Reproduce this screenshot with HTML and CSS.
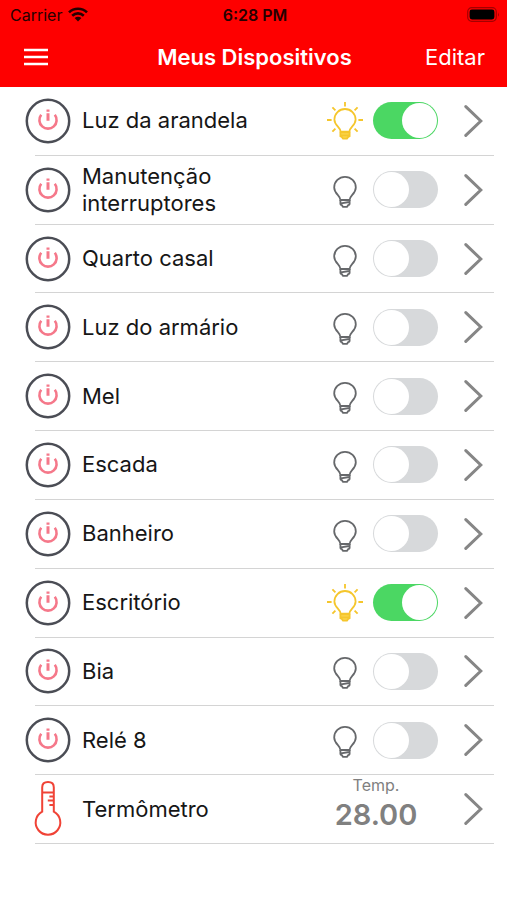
FILE: index.html
```html
<!DOCTYPE html>
<html lang="pt-BR">
<head>
<meta charset="utf-8">
<meta name="viewport" content="width=device-width, initial-scale=1">
<title>Meus Dispositivos</title>
<link rel="stylesheet" href="styles.css">
</head>
<body>
<svg class="sprite" aria-hidden="true">
  <symbol id="power" viewBox="0 0 46 46">
    <circle cx="23" cy="23" r="21.2" fill="none" stroke="#4b4d55" stroke-width="2.5"/>
    <path d="M16.2 16.8A8.6 8.6 0 1 0 29.8 16.8" fill="none" stroke="#f5788a" stroke-width="2.6"/>
    <path d="M23 11.6v2.2M23 15.2v7.6" fill="none" stroke="#f5788a" stroke-width="3"/>
  </symbol>
  <symbol id="bulb" viewBox="0 0 36 38">
    <path d="M13.4 29C13.4 24.6 7.2 22.8 7.2 16.4A10.8 10.6 0 0 1 28.8 16.4C28.8 22.8 22.6 24.6 22.6 29Z"/>
    <path d="M13.4 29V33Q13.6 34 14.8 34.2L16 35.8H20L21.2 34.2Q22.4 34 22.6 33V29M14 32.4L22 31"/>
  </symbol>
  <symbol id="rays" viewBox="0 0 36 38">
    <path d="M18 0v4.4M5.4 5.4l3 3M30.6 5.4l-3 3M0 18h4.6M31.4 18H36M5.4 29.6l3-3M30.6 29.6l-3-3"/>
    <path d="M13.6 29.6C13.6 25.2 7.4 23.6 7.4 17.4A10.6 10.4 0 0 1 28.6 17.4C28.6 23.6 22.4 25.2 22.4 29.6Z"/>
    <path d="M13.4 30.4h9.2v3.8l-1.4.8-1.2 1.6h-4l-1.2-1.6-1.4-.8Z" fill="#fbd54c"/>
    <path d="M14 33.4h8"/>
  </symbol>
  <symbol id="chevron" viewBox="0 0 20 34">
    <path d="M1.8 2.6L16.8 17 1.8 31.4" fill="none" stroke="#868686" stroke-width="3" stroke-linecap="round"/>
  </symbol>
</svg>

<header class="top">
  <div class="status">
    <span class="carrier">Carrier
      <svg class="wifi" viewBox="0 0 20 15" aria-hidden="true">
        <path d="M1 5.4C6 .6 14 .6 19 5.4M4.2 8.7C7.6 5.6 12.4 5.6 15.8 8.7" fill="none" stroke="#260000" stroke-width="2.6"/>
        <path d="M6.6 11.1C8.6 9.3 11.4 9.3 13.4 11.1L10 14.6Z" fill="#260000"/>
      </svg>
    </span>
    <span class="time">6:28 PM</span>
    <svg class="battery" viewBox="0 0 33 15" aria-hidden="true">
      <rect x=".7" y=".7" width="28.6" height="13.6" rx="4" fill="none" stroke="#a30000" stroke-width="1.2"/>
      <rect x="2.6" y="2.6" width="24.8" height="9.8" rx="2.4" fill="#000"/>
      <path d="M31 5.2q1.8 2.3 0 4.6Z" fill="#a30000"/>
    </svg>
  </div>
  <nav class="bar">
    <button class="menu" type="button" aria-label="Menu">
      <svg viewBox="0 0 24 18" aria-hidden="true"><path d="M0 2h24M0 9h24M0 16h24" stroke="#fff" stroke-width="2.6"/></svg>
    </button>
    <h1>Meus Dispositivos</h1>
    <button class="edit" type="button">Editar</button>
  </nav>
</header>

<main>
<ul class="devices">
  <li class="row"><svg class="icon" aria-hidden="true"><use href="#power"/></svg><label class="name" for="d1">Luz da arandela</label><svg class="bulb on" aria-hidden="true"><use href="#rays"/></svg><input class="switch" type="checkbox" id="d1" checked><a class="more" href="#d1" aria-label="Detalhes"><svg aria-hidden="true"><use href="#chevron"/></svg></a></li>
  <li class="row"><svg class="icon" aria-hidden="true"><use href="#power"/></svg><label class="name" for="d2">Manutenção interruptores</label><svg class="bulb" aria-hidden="true"><use href="#bulb"/></svg><input class="switch" type="checkbox" id="d2"><a class="more" href="#d2" aria-label="Detalhes"><svg aria-hidden="true"><use href="#chevron"/></svg></a></li>
  <li class="row"><svg class="icon" aria-hidden="true"><use href="#power"/></svg><label class="name" for="d3">Quarto casal</label><svg class="bulb" aria-hidden="true"><use href="#bulb"/></svg><input class="switch" type="checkbox" id="d3"><a class="more" href="#d3" aria-label="Detalhes"><svg aria-hidden="true"><use href="#chevron"/></svg></a></li>
  <li class="row"><svg class="icon" aria-hidden="true"><use href="#power"/></svg><label class="name" for="d4">Luz do armário</label><svg class="bulb" aria-hidden="true"><use href="#bulb"/></svg><input class="switch" type="checkbox" id="d4"><a class="more" href="#d4" aria-label="Detalhes"><svg aria-hidden="true"><use href="#chevron"/></svg></a></li>
  <li class="row"><svg class="icon" aria-hidden="true"><use href="#power"/></svg><label class="name" for="d5">Mel</label><svg class="bulb" aria-hidden="true"><use href="#bulb"/></svg><input class="switch" type="checkbox" id="d5"><a class="more" href="#d5" aria-label="Detalhes"><svg aria-hidden="true"><use href="#chevron"/></svg></a></li>
  <li class="row"><svg class="icon" aria-hidden="true"><use href="#power"/></svg><label class="name" for="d6">Escada</label><svg class="bulb" aria-hidden="true"><use href="#bulb"/></svg><input class="switch" type="checkbox" id="d6"><a class="more" href="#d6" aria-label="Detalhes"><svg aria-hidden="true"><use href="#chevron"/></svg></a></li>
  <li class="row"><svg class="icon" aria-hidden="true"><use href="#power"/></svg><label class="name" for="d7">Banheiro</label><svg class="bulb" aria-hidden="true"><use href="#bulb"/></svg><input class="switch" type="checkbox" id="d7"><a class="more" href="#d7" aria-label="Detalhes"><svg aria-hidden="true"><use href="#chevron"/></svg></a></li>
  <li class="row"><svg class="icon" aria-hidden="true"><use href="#power"/></svg><label class="name" for="d8">Escritório</label><svg class="bulb on" aria-hidden="true"><use href="#rays"/></svg><input class="switch" type="checkbox" id="d8" checked><a class="more" href="#d8" aria-label="Detalhes"><svg aria-hidden="true"><use href="#chevron"/></svg></a></li>
  <li class="row"><svg class="icon" aria-hidden="true"><use href="#power"/></svg><label class="name" for="d9">Bia</label><svg class="bulb" aria-hidden="true"><use href="#bulb"/></svg><input class="switch" type="checkbox" id="d9"><a class="more" href="#d9" aria-label="Detalhes"><svg aria-hidden="true"><use href="#chevron"/></svg></a></li>
  <li class="row"><svg class="icon" aria-hidden="true"><use href="#power"/></svg><label class="name" for="d10">Relé 8</label><svg class="bulb" aria-hidden="true"><use href="#bulb"/></svg><input class="switch" type="checkbox" id="d10"><a class="more" href="#d10" aria-label="Detalhes"><svg aria-hidden="true"><use href="#chevron"/></svg></a></li>
  <li class="row" id="d11">
    <svg class="icon thermo" viewBox="0 0 46 56" aria-hidden="true">
      <path d="M17.2 30.6V6.4Q17.2 1 23 1T28.8 6.4V30.6A12.3 12.3 0 1 1 17.2 30.6ZM17.2 11.4H28.8M28.8 15.4H24.4M28.8 19.6H22.8M28.8 24H24.4" fill="none" stroke="#f04336" stroke-width="2"/>
    </svg>
    <span class="name">Termômetro</span>
    <span class="reading"><span class="unit">Temp.</span><span class="value">28.00</span></span>
    <a class="more" href="#d11" aria-label="Detalhes"><svg aria-hidden="true"><use href="#chevron"/></svg></a>
  </li>
</ul>
</main>
</body>
</html>
```
FILE: styles.css
```css
* {
  box-sizing: border-box;
}

body {
  margin: 0;
  background: #fff;
  color: #161616;
  font-family: Inter, "Liberation Sans", sans-serif;
}

button {
  border: 0;
  padding: 0;
  background: none;
  color: #fff;
  font: inherit;
}

svg {
  display: block;
  flex: none;
}

.sprite {
  position: absolute;
  width: 0;
  height: 0;
}

/* Header */
.top {
  padding-bottom: 2px;
  background: #fe0000;
  color: #fff;
}

.status,
.bar {
  display: grid;
  grid-template-columns: 1fr auto 1fr;
  align-items: center;
}

.status {
  height: 29px;
  padding: 0 7px 0 10px;
  color: #260000;
  font-size: 16px;
}

.carrier {
  display: flex;
  align-items: center;
  gap: 6px;
}

.wifi {
  width: 20px;
  height: 15px;
}

.time {
  font-size: 16px;
  font-weight: 600;
}

.battery {
  width: 33px;
  height: 15px;
  justify-self: end;
}

.bar {
  height: 56px;
  padding: 0 22px 0 24px;
}

.menu {
  justify-self: start;
}

.menu svg {
  width: 24px;
  height: 18px;
}

h1 {
  margin: 0;
  font-size: 22px;
  font-weight: 600;
}

.edit {
  justify-self: end;
  font-size: 22px;
}

/* Device list */
.devices {
  display: grid;
  grid-auto-rows: 1fr;
  min-height: 757px;
  margin: 0;
  padding: 0;
  list-style: none;
}

.row {
  display: flex;
  align-items: center;
  margin: 0 13px 0 35px;
  padding-right: 10px;
  border-bottom: 1px solid #d4d4d4;
}

.icon {
  width: 46px;
  height: 46px;
  margin: 0 11px 0 -10px;
}

.thermo {
  height: 56px;
}

.name {
  flex: 1;
  min-width: 0;
  font-size: 22px;
  line-height: 27px;
}

label.name {
  padding-right: 60px;
}

.bulb {
  width: 36px;
  height: 38px;
  margin-right: 10px;
  fill: none;
  stroke: #66686b;
  stroke-width: 1.8;
}

.bulb.on {
  stroke: #f5c62c;
}

.switch {
  appearance: none;
  flex: none;
  width: 65px;
  height: 37px;
  margin: 0;
  padding: 1px;
  border-radius: 19px;
  background: #d7d9db;
}

.switch::before {
  content: "";
  display: block;
  width: 35px;
  height: 35px;
  border-radius: 50%;
  background: #fff;
}

.switch:checked {
  background: #4bd763;
}

.switch:checked::before {
  margin-left: auto;
}

.more {
  margin-left: 26px;
}

.more svg {
  width: 20px;
  height: 34px;
}

.reading {
  display: flex;
  flex-direction: column;
  align-items: center;
  align-self: flex-start;
  width: 124px;
  color: #808080;
}

.unit {
  font-size: 16px;
  line-height: 20px;
}

.value {
  font-size: 29px;
  font-weight: 600;
  line-height: 40px;
}
```
